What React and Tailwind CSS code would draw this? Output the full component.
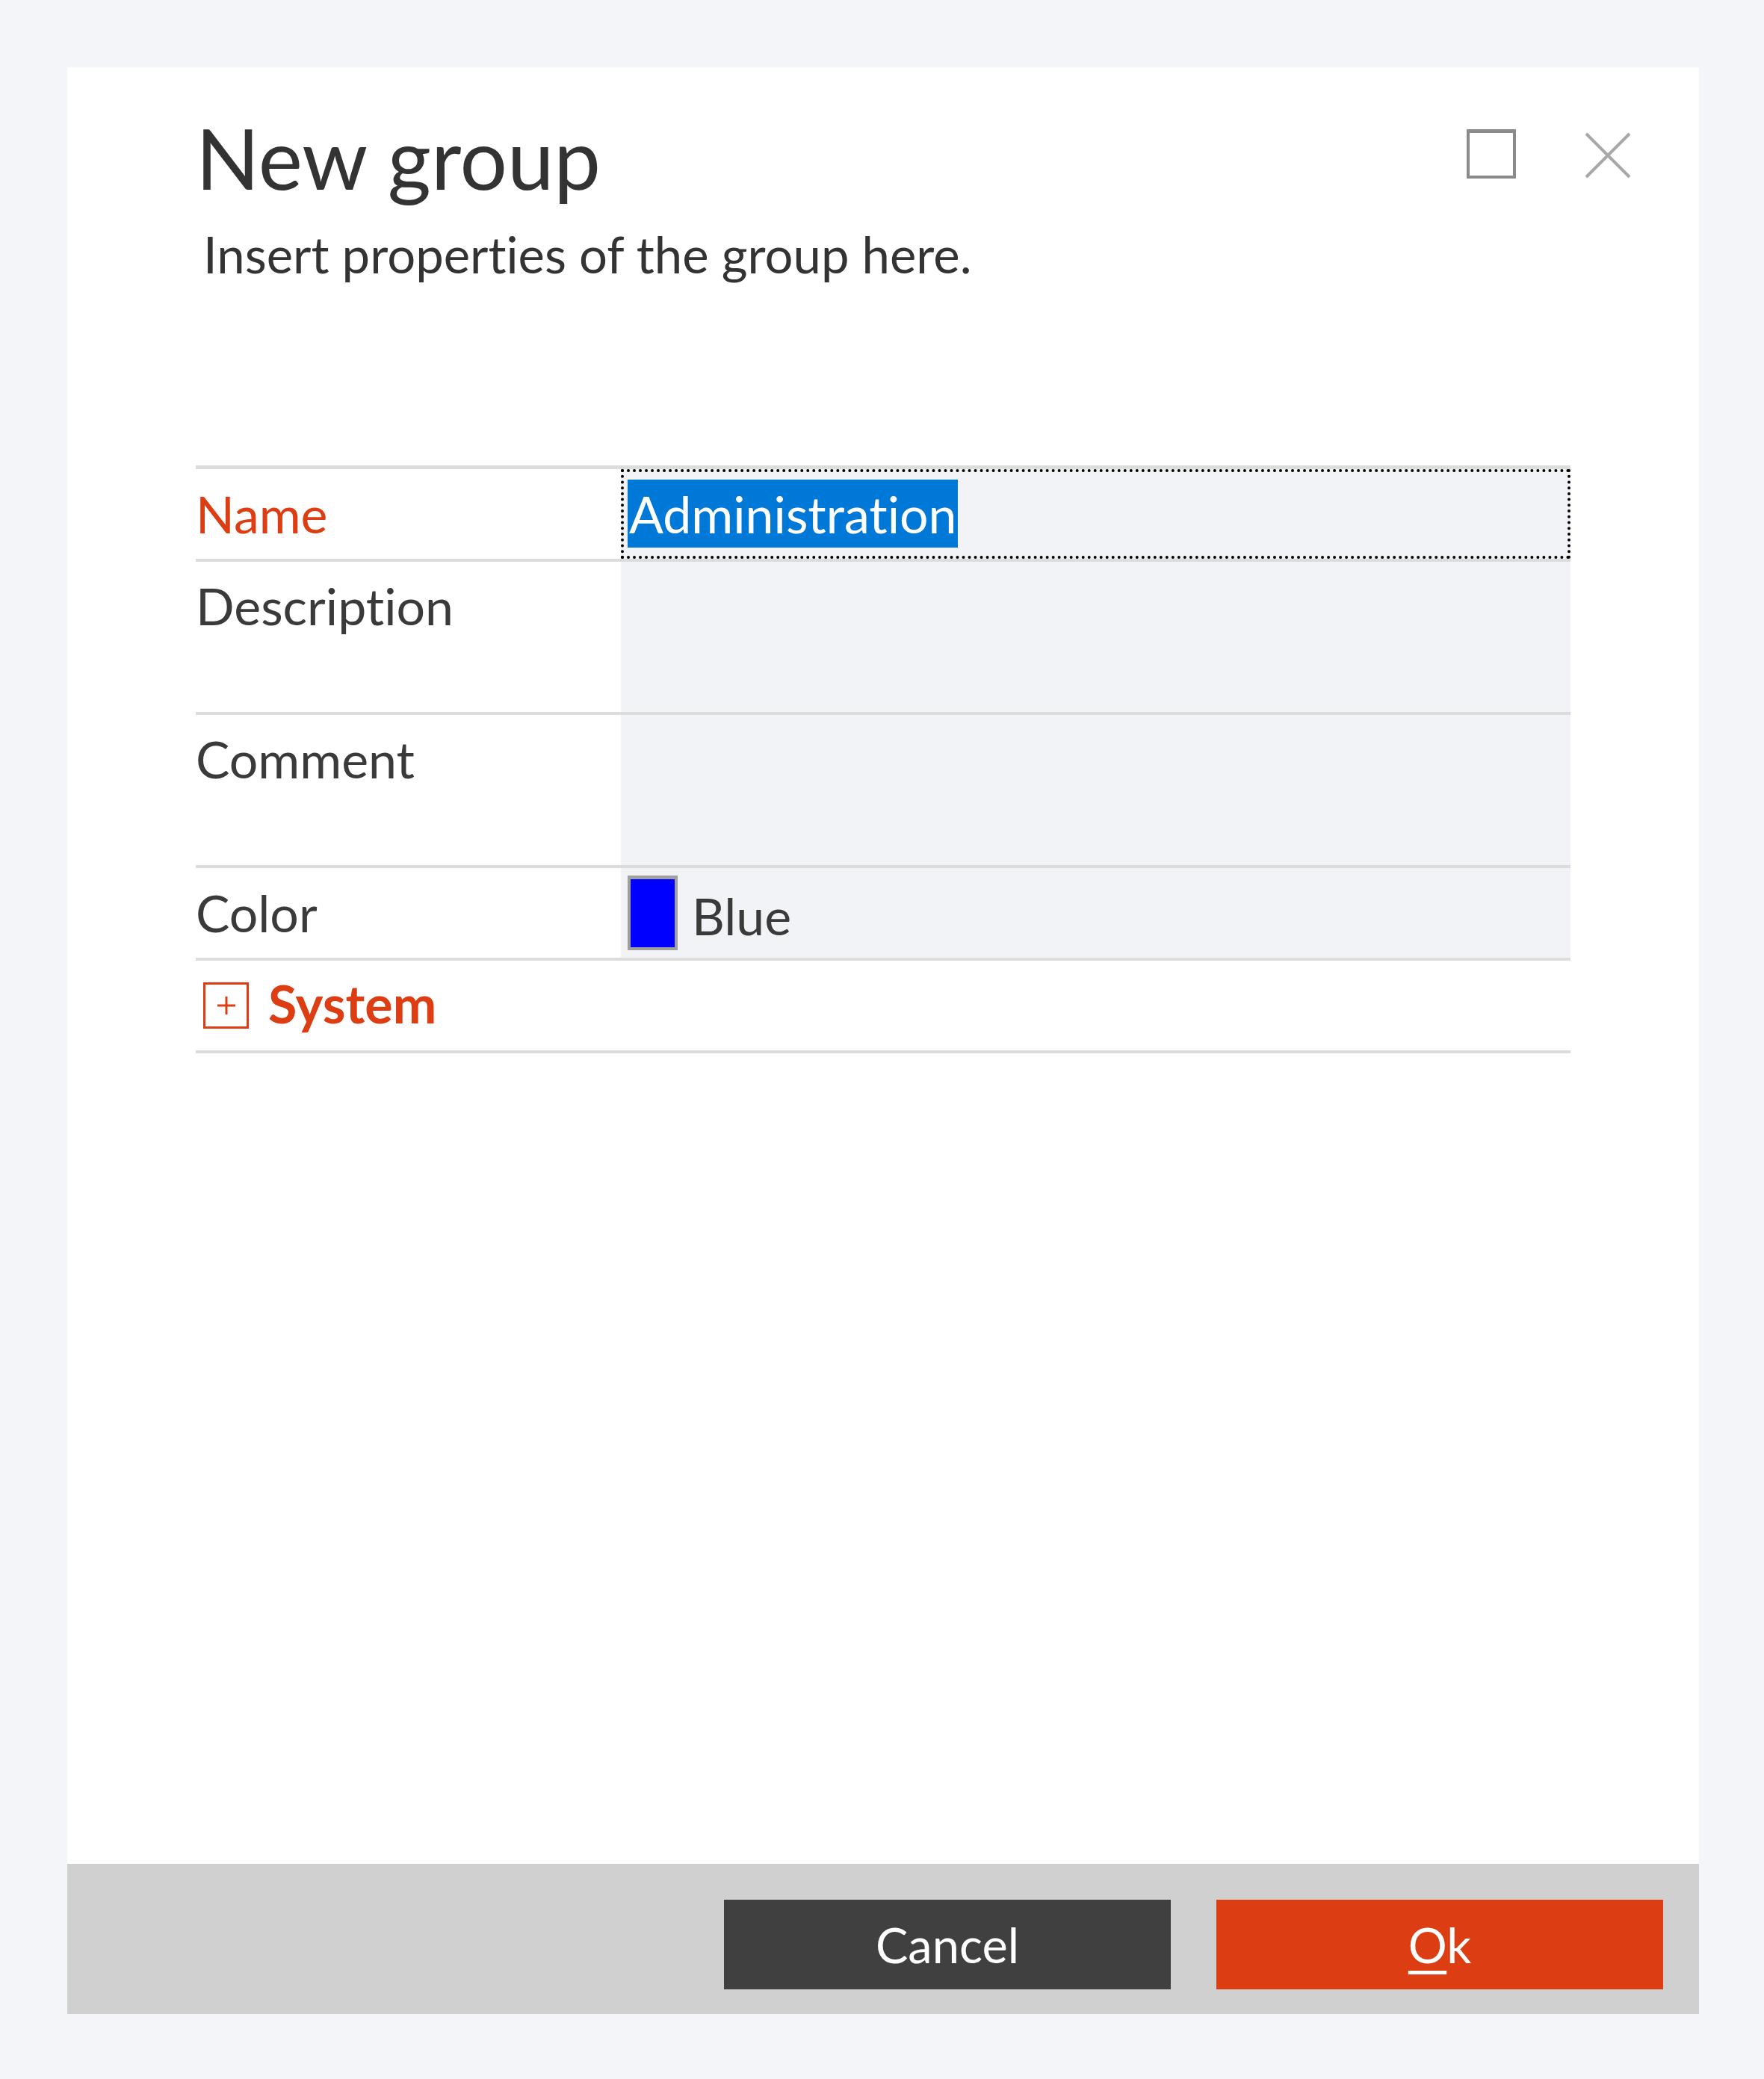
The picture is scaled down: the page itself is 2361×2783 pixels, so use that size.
import React from "react";

const font = { fontFamily: '"Segoe UI", Lato, "Noto Sans", sans-serif' };

function Row({ label, labelClass = "text-[#3a3a3a]", tall, children, valueClass = "bg-[#f2f3f7]" }) {
  return (
    <div className={`flex border-b-[4px] border-[#dcdcdc] ${tall ? "h-[205px]" : "h-[124px]"}`}>
      <div className={`w-[569px] shrink-0 ${tall ? "pt-[18px]" : "flex items-center"} ${labelClass}`}>
        {label}
      </div>
      <div className={`flex-1 ${valueClass}`}>{children}</div>
    </div>
  );
}

export default function App() {
  return (
    <div
      className="w-[2361px] h-[2783px] bg-[#f3f5f9] pt-[90px] pl-[90px] [font-variant-ligatures:none]"
      style={font}
    >
      <div className="w-[2184px] h-[2606px] bg-white flex flex-col">
        {/* Header */}
        <div className="flex justify-between pl-[172px] pr-[91px] pt-[54px]">
          <div>
            <h1 className="text-[112px] leading-[1.2] text-[#333333] font-normal">New group</h1>
            <p className="text-[67px] leading-[1.2] text-[#333333] pl-[10px] mt-[22px]">
              Insert properties of the group here.
            </p>
          </div>
          <div className="flex items-start gap-[92px] pt-[29px]">
            <div className="w-[66px] h-[66px] border-[4px] border-t-[5px] border-[#8a8a8a]" />
            <svg width="62" height="62" viewBox="0 0 62 62" className="mt-[4px]">
              <path d="M2 2 L60 60 M60 2 L2 60" stroke="#a8a8a8" strokeWidth="4" fill="none" />
            </svg>
          </div>
        </div>

        {/* Property grid */}
        <div className="ml-[172px] w-[1840px] mt-[242px] border-t-[5px] border-[#dcdcdc] text-[68px] leading-[1.2]">
          <Row label="Name" labelClass="text-[#dc3d12]" valueClass="bg-[#f2f3f7] p-0">
            <div className="h-full border-[4px] border-dotted border-[#000] flex items-center pl-[5px]">
              <span className="bg-[#0078d7] text-white h-[91px] flex items-center px-[2px]">
                Administration
              </span>
            </div>
          </Row>
          <Row label="Description" tall />
          <Row label="Comment" tall />
          <Row label="Color">
            <div className="h-full flex items-center pl-[9px] gap-[19px]">
              <div className="w-[67px] h-[100px] border-[4px] border-t-[5px] border-[#a0a0a0] bg-[#0000ff]" />
              <span className="text-[#3a3a3a] pt-[8px]">Blue</span>
            </div>
          </Row>
          <div className="flex items-center h-[124px] border-b-[4px] border-[#dcdcdc] pl-[10px]">
            <div className="w-[61px] h-[62px] border-[3px] border-[#dc3d12] flex items-center justify-center">
              <svg width="24" height="24" viewBox="0 0 24 24">
                <path d="M12 0 V24 M0 12 H24" stroke="#dc3d12" strokeWidth="3" />
              </svg>
            </div>
            <span className="ml-[26px] font-bold text-[70px] text-[#dc3d12] -mt-[6px]">System</span>
          </div>
        </div>

        <div className="flex-1" />

        {/* Footer */}
        <div className="h-[201px] bg-[#d0d0d0] flex justify-end items-start gap-[61px] pt-[48px] pr-[48px]">
          <button className="w-[598px] h-[120px] bg-[#404040] text-white text-[65px] leading-none flex items-center justify-center">
            Cancel
          </button>
          <button className="w-[598px] h-[120px] bg-[#dc3d12] text-white text-[65px] leading-none flex items-center justify-center">
            <span>
              <span className="underline decoration-[5px] underline-offset-[10px]">O</span>k
            </span>
          </button>
        </div>
      </div>
    </div>
  );
}
